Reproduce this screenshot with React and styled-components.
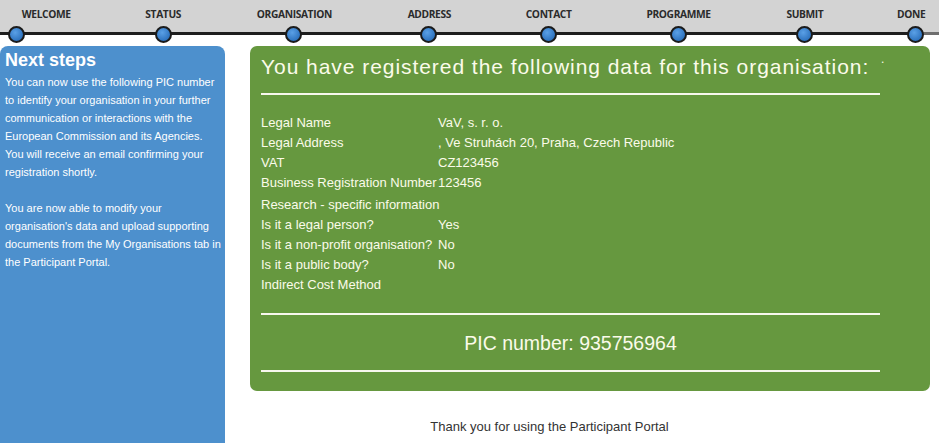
import React from "react";
import styled, { createGlobalStyle } from "styled-components";

const steps = [
  { name: "WELCOME", node: "start" },
  { name: "STATUS" },
  { name: "ORGANISATION" },
  { name: "ADDRESS" },
  { name: "CONTACT" },
  { name: "PROGRAMME" },
  { name: "SUBMIT" },
  { name: "DONE", node: "end" },
];

const rows = [
  { label: "Legal Name", value: "VaV, s. r. o." },
  { label: "Legal Address", value: ", Ve Struhách 20, Praha, Czech Republic" },
  { label: "VAT", value: "CZ123456" },
  { label: "Business Registration Number", value: "123456" },
  { label: "Research - specific information", value: "", wide: true },
  { label: "Is it a legal person?", value: "Yes" },
  { label: "Is it a non-profit organisation?", value: "No" },
  { label: "Is it a public body?", value: "No" },
  { label: "Indirect Cost Method", value: "" },
];

const GlobalStyle = createGlobalStyle`
  html, body {
    margin: 0;
    padding: 0;
    background: #ffffff;
  }
  body {
    font-family: "Liberation Sans", Arial, sans-serif;
    overflow: hidden;
  }
`;

export default function App() {
  return (
    <>
      <GlobalStyle />
      <Page>
        <Stepper>
          {steps.map((s) => (
            <Step key={s.name} $node={s.node}>
              <StepLabel>{s.name}</StepLabel>
              <Node />
            </Step>
          ))}
        </Stepper>
        <Body>
          <Sidebar>
            <h2>Next steps</h2>
            <p>
              You can now use the following PIC number to identify your
              organisation in your further communication or interactions with
              the European Commission and its Agencies. You will receive an
              email confirming your registration shortly.
            </p>
            <p>
              You are now able to modify your organisation's data and upload
              supporting documents from the My Organisations tab in the
              Participant Portal.
            </p>
          </Sidebar>
          <Main>
            <Summary>
              <Title>
                You have registered the following data for this organisation:
                <Dot>.</Dot>
              </Title>
              <Rule />
              <DataList>
                {rows.map((r) => (
                  <DataRow key={r.label} $wide={r.wide}>
                    <dt>{r.label}</dt>
                    <dd>{r.value}</dd>
                  </DataRow>
                ))}
              </DataList>
              <Rule />
              <Pic>PIC number: 935756964</Pic>
              <Rule />
            </Summary>
            <Thanks>Thank you for using the Participant Portal</Thanks>
          </Main>
        </Body>
      </Page>
    </>
  );
}

const Page = styled.div`
  width: 939px;
  height: 443px;
  display: flex;
  flex-direction: column;
`;

const Stepper = styled.div`
  position: relative;
  height: 46px;
  padding: 0 13px 0 20px;
  box-sizing: border-box;
  display: flex;
  justify-content: space-between;
  background: linear-gradient(#d3d3d3 0, #d3d3d3 32px, #ffffff 32px);
  &::before {
    content: "";
    position: absolute;
    left: 0;
    right: 0;
    top: 32px;
    height: 3px;
    background: linear-gradient(90deg, #1e1e1e 0, #1e1e1e 916px, #6e6e6e 916px);
  }
`;

const Step = styled.div`
  position: relative;
  display: flex;
  flex-direction: column;
  align-items: ${(p) =>
    p.$node === "start" ? "flex-start" : p.$node === "end" ? "flex-end" : "center"};
  padding-top: 6px;
  & > i {
    margin-left: ${(p) => (p.$node === "start" ? "-12px" : "0")};
    margin-right: ${(p) => (p.$node === "end" ? "2px" : "0")};
  }
`;

const StepLabel = styled.span`
  font-family: "Open Sans", sans-serif;
  font-weight: 700;
  font-size: 11px;
  line-height: 15px;
  color: #2b2b2b;
  letter-spacing: -0.4px;
  transform: scaleX(0.93);
`;

const Node = styled.i`
  display: block;
  width: 13px;
  height: 13px;
  margin-top: 5px;
  border-radius: 50%;
  border: 2px solid #1b1b1b;
  background: radial-gradient(circle at 40% 35%, #5aa0e6 0, #2f74c0 70%);
`;

const Body = styled.div`
  flex: 1;
  display: flex;
  min-height: 0;
`;

const Sidebar = styled.aside`
  width: 225px;
  flex: none;
  box-sizing: border-box;
  padding: 3px 3px 0 5px;
  background: #4d90cd;
  border-radius: 8px 8px 0 0;
  color: #ffffff;
  h2 {
    margin: 0 0 2px;
    font-size: 18px;
    line-height: 22px;
    font-weight: bold;
  }
  p {
    margin: 0 0 18px;
    font-size: 11px;
    line-height: 18px;
  }
`;

const Main = styled.main`
  flex: 1;
  display: flex;
  flex-direction: column;
  padding: 0 9px 0 25px;
`;

const Summary = styled.section`
  height: 345px;
  box-sizing: border-box;
  padding: 9px 50px 0 11px;
  background: #66983f;
  border-radius: 7px;
  color: #fbfbea;
`;

const Title = styled.h1`
  position: relative;
  margin: 0;
  padding-bottom: 2px;
  font-size: 21px;
  line-height: 24px;
  font-weight: normal;
  letter-spacing: 0.95px;
  white-space: nowrap;
`;

const Dot = styled.span`
  position: absolute;
  left: 620px;
  top: -8px;
  font-size: 12px;
  letter-spacing: 0;
`;

const Rule = styled.hr`
  margin: 12px 0 0;
  border: none;
  height: 2px;
  background: #f7f7ee;
`;

const DataList = styled.dl`
  margin: 18px 0 18px;
  font-size: 13px;
  line-height: 20px;
`;

const DataRow = styled.div`
  display: grid;
  grid-template-columns: 177px 1fr;
  margin: ${(p) => (p.$wide ? "2px 0 0" : "0")};
  dt,
  dd {
    margin: 0;
    white-space: nowrap;
  }
`;

const Pic = styled.div`
  margin-top: 13px;
  text-align: center;
  font-size: 19.5px;
  line-height: 30px;
`;

const Thanks = styled.p`
  margin: 28px 0 0;
  padding-right: 81px;
  text-align: center;
  font-size: 13px;
  line-height: 16px;
  color: #333333;
`;
